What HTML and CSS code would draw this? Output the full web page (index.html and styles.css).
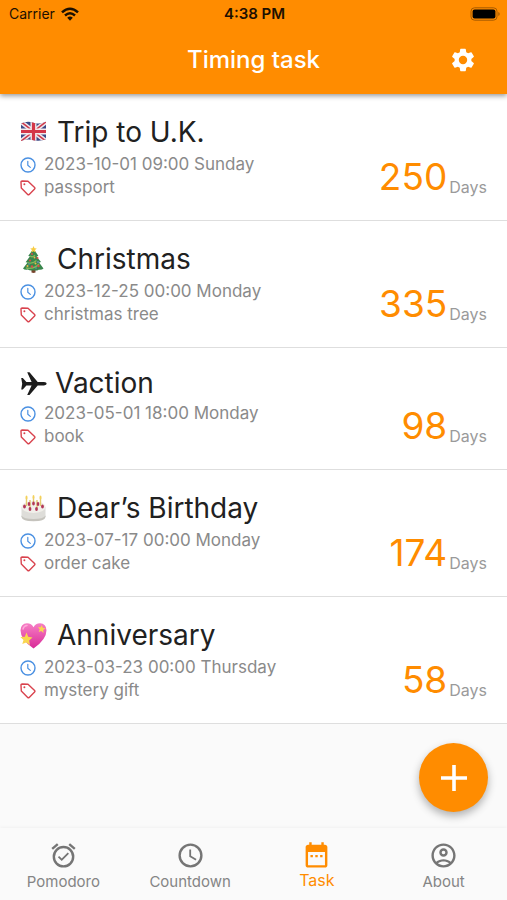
FILE: index.html
```html
<!DOCTYPE html>
<html lang="en">
<head>
	<meta charset="utf-8">
	<meta name="viewport" content="width=device-width, initial-scale=1">
	<title>Timing task</title>
	<link rel="stylesheet" href="styles.css">
</head>
<body>
	<svg class="sprite" aria-hidden="true">
		<symbol id="clock" viewBox="0 0 24 24">
			<path d="M12 2a10 10 0 1 0 0 20 10 10 0 0 0 0-20zm0 18a8 8 0 1 1 0-16 8 8 0 0 1 0 16zm.5-13H11v6l5.2 3.1.8-1.2-4.5-2.7V7z"/>
		</symbol>
		<symbol id="time" viewBox="0 0 16 16">
			<g fill="none" stroke="currentColor" stroke-linecap="round" stroke-linejoin="round">
				<circle cx="8" cy="8" r="7" stroke-width="1.4"/>
				<path d="M7.8 4.3v4l2.5 2.1" stroke-width="1.2"/>
			</g>
		</symbol>
		<symbol id="tag" viewBox="0 0 16 16">
			<path d="M1 2.2Q1 1 2.2 1L8 1.2l6.6 6.3q.7.8 0 1.5l-5.4 5.4q-.8.7-1.5 0L1.3 8z" fill="none" stroke="currentColor" stroke-width="1.4" stroke-linejoin="round"/>
			<circle cx="4.4" cy="4.2" r="1" fill="currentColor"/>
		</symbol>
	</svg>

	<header class="header">
		<div class="status">
			<div class="carrier">
				<span>Carrier</span>
				<svg class="wifi" viewBox="0 0 18 14" aria-hidden="true">
					<g fill="none" stroke="#1d1000" stroke-width="2.5">
						<path d="M1 5.4Q9-2 17 5.4"/>
						<path d="M4 8.5q5-4.4 10 0"/>
					</g>
					<path d="M6.2 10.7q2.8-2.4 5.6 0L9 13.7z" fill="#1d1000"/>
				</svg>
			</div>
			<span class="clock">4:38 PM</span>
			<svg class="battery" viewBox="0 0 30 14" aria-hidden="true">
				<rect x="1" y=".8" width="26" height="12.4" rx="3.5" fill="none" stroke="#a65b00"/>
				<rect x="2.6" y="2.4" width="22.8" height="9.2" rx="2" fill="#000"/>
				<path d="M28.3 5v4q1.4-.6 1.4-2t-1.4-2z" fill="#a65b00"/>
			</svg>
		</div>
		<div class="bar">
			<h1>Timing task</h1>
			<button class="settings" aria-label="Settings">
				<svg viewBox="0 0 24 24"><path d="M19.14 12.94c.04-.3.06-.61.06-.94 0-.32-.02-.64-.07-.94l2.03-1.58a.49.49 0 0 0 .12-.61l-1.92-3.32a.488.488 0 0 0-.59-.22l-2.39.96c-.5-.38-1.03-.7-1.62-.94l-.36-2.54a.484.484 0 0 0-.48-.41h-3.84c-.24 0-.43.17-.47.41l-.36 2.54c-.59.24-1.13.57-1.62.94l-2.39-.96c-.22-.08-.47 0-.59.22L2.74 8.87c-.12.21-.08.47.12.61l2.03 1.58c-.05.3-.09.63-.09.94s.02.64.07.94l-2.03 1.58a.49.49 0 0 0-.12.61l1.92 3.32c.12.22.37.29.59.22l2.39-.96c.5.38 1.03.7 1.62.94l.36 2.54c.05.24.24.41.48.41h3.84c.24 0 .44-.17.47-.41l.36-2.54c.59-.24 1.13-.56 1.62-.94l2.39.96c.22.08.47 0 .59-.22l1.92-3.32c.12-.22.07-.47-.12-.61l-2.01-1.58zM12 15.6A3.6 3.6 0 1 1 12 8.4a3.6 3.6 0 0 1 0 7.2z"/></svg>
			</button>
		</div>
	</header>

	<main class="content">
		<ul class="tasks">
			<li class="task">
				<div class="info">
					<h2>
						<svg class="emoji" viewBox="0 0 27 27" aria-hidden="true">
							<clipPath id="flag"><path d="M1 4.5q6-3 12.500-.8t12.500-.9v17.500q-6 2.400-12.500.9T1 22z"/></clipPath>
							<g clip-path="url(#flag)">
								<path d="M0 0h27v27H0z" fill="#3c4a87"/>
								<path d="M0 2l27 21M27 2L0 23" stroke="#eee5ea" stroke-width="4.5"/>
								<path d="M0 2l27 21M27 2L0 23" stroke="#cf3849" stroke-width="1.5"/>
								<path d="M13.5 1v23M0 12.5h27" stroke="#f3e9ec" stroke-width="6"/>
								<path d="M13.5 1v23M0 12.5h27" stroke="#d43648" stroke-width="3.2"/>
							</g>
						</svg>
						Trip to U.K.
					</h2>
					<p><svg class="time"><use href="#time"/></svg>2023-10-01 09:00 Sunday</p>
					<p><svg class="tag"><use href="#tag"/></svg>passport</p>
				</div>
				<div class="left"><strong>250</strong><span>Days</span></div>
			</li>
			<li class="task">
				<div class="info">
					<h2>
						<svg class="emoji" viewBox="0 0 27 27" aria-hidden="true">
							<path d="M11.5 22h4v4.5q-2 .8-4 0z" fill="#79452e"/>
							<path d="M13.5 2.500L8.200 10l1.800.2-4.400 6 2 .2-4.600 6q2 1.900 4.700 1 2.600 1.600 5.400.8 3.300 1 5.600-.5 3 .6 4.800-1.300l-4.400-6 1.900-.4-4.400-5.600 1.800-.4z" fill="#39864d"/>
							<path d="M10 10q3 2 5-1M7.5 16.5q5 2 9-2M6 22q8 1.500 13-4" fill="none" stroke="#83b85a" stroke-width="1.3"/>
							<path d="M13.5 0l1 2.300 2.300.2-1.800 1.600.6 2.400-2.100-1.300-2.100 1.300.6-2.400-1.800-1.600 2.300-.2z" fill="#f8cc42"/>
							<g fill="#d94c48"><circle cx="12" cy="8" r="1"/><circle cx="17.5" cy="12" r="1"/><circle cx="10" cy="14.5" r="1.1"/><circle cx="18.5" cy="20" r="1.2"/><circle cx="12" cy="20.5" r="1.2"/></g>
							<g fill="#f0b94a"><circle cx="14.5" cy="11.5" r=".9"/><circle cx="15.5" cy="17.5" r="1"/><circle cx="7.5" cy="20" r="1"/></g>
							<g fill="#6b90c0"><circle cx="18" cy="16" r=".9"/><circle cx="9" cy="18" r=".8"/><circle cx="16" cy="22" r=".8"/></g>
						</svg>
						Christmas
					</h2>
					<p><svg class="time"><use href="#time"/></svg>2023-12-25 00:00 Monday</p>
					<p><svg class="tag"><use href="#tag"/></svg>christmas tree</p>
				</div>
				<div class="left"><strong>335</strong><span>Days</span></div>
			</li>
			<li class="task compact">
				<div class="info">
					<h2>
						<svg class="emoji" viewBox="0 0 27 27" aria-hidden="true"><path d="M1.200 8h1.600l3.600 4h5.200L7.200 2.300h2.300l8.200 9.700H24q2.700.4 2.700 1.700T24 15.400h-6.300l-8.200 9.700H7.200l4.400-9.700H6.400l-3.600 4H1.200l1-5.700z" fill="#1c1c1c"/></svg>
						Vaction
					</h2>
					<p><svg class="time"><use href="#time"/></svg>2023-05-01 18:00 Monday</p>
					<p><svg class="tag"><use href="#tag"/></svg>book</p>
				</div>
				<div class="left"><strong>98</strong><span>Days</span></div>
			</li>
			<li class="task">
				<div class="info">
					<h2>
						<svg class="emoji" viewBox="0 0 27 27" aria-hidden="true">
							<path d="M1.500 12v9.500q1 4.500 12 4.500t12-4.500V12z" fill="#deddd9"/>
							<path d="M1.500 20.500v1.500q1 4.300 12 4.300t12-4.300v-1.500q-2 3.500-12 3.500t-12-3.500z" fill="#c5c3bd"/>
							<ellipse cx="13.5" cy="12" rx="12" ry="6" fill="#f1efea"/>
							<g stroke="#e4ca70" stroke-width="1.4"><path d="M6.500 3v8M13.500 2v8M20.500 3v8M10 5v8M17 5v8"/></g>
							<g fill="#f4d15a"><ellipse cx="6.5" cy="2.5" rx="1" ry="1.9"/><ellipse cx="13.5" cy="2" rx="1" ry="1.9"/><ellipse cx="20.5" cy="2.5" rx="1" ry="1.9"/></g>
							<g fill="#b23858"><ellipse cx="4.5" cy="11.5" rx="1.4" ry="2"/><ellipse cx="9" cy="9" rx="1.3" ry="2"/><ellipse cx="13.5" cy="8.5" rx="1.3" ry="2"/><ellipse cx="18" cy="9" rx="1.3" ry="2"/><ellipse cx="22.5" cy="11.5" rx="1.4" ry="2"/><ellipse cx="10" cy="14" rx="1.4" ry="2"/><ellipse cx="16.5" cy="14" rx="1.4" ry="2"/></g>
						</svg>
						Dear’s Birthday
					</h2>
					<p><svg class="time"><use href="#time"/></svg>2023-07-17 00:00 Monday</p>
					<p><svg class="tag"><use href="#tag"/></svg>order cake</p>
				</div>
				<div class="left"><strong>174</strong><span>Days</span></div>
			</li>
			<li class="task">
				<div class="info">
					<h2>
						<svg class="emoji" viewBox="0 0 27 27" aria-hidden="true">
							<linearGradient id="pink" x2="0" y2="1"><stop stop-color="#f77fc5"/><stop offset="1" stop-color="#d82b98"/></linearGradient>
							<path d="M13.500 26.500Q.5 17.500.5 8.200.8 1.500 7 1.200q4.500 0 6.500 4 2-4 6.500-4 6.200.3 6.500 7 0 9.300-13 18.300z" fill="url(#pink)"/>
							<path d="M3 7q.8-3.300 4-3.500" fill="none" stroke="#ffa9da" stroke-width="1.5" stroke-linecap="round"/>
							<path d="M6.500 10.500l1.700 4.300 4.300.7-3.300 2.900.8 4.600-3.800-2.600L2.300 22l1.200-4L.4 15l4.400-.3z" fill="#f9d650"/>
							<path d="M21.800 3l1 2.700 2.800.6-2.300 1.600.2 3-2.200-1.900-2.600 1 1-2.700-1.700-2.100 2.700.1z" fill="#f9d650"/>
						</svg>
						Anniversary
					</h2>
					<p><svg class="time"><use href="#time"/></svg>2023-03-23 00:00 Thursday</p>
					<p><svg class="tag"><use href="#tag"/></svg>mystery gift</p>
				</div>
				<div class="left"><strong>58</strong><span>Days</span></div>
			</li>
		</ul>
		<button class="add" aria-label="Add task">
			<svg viewBox="0 0 26 26"><path d="M13 0v26M0 13h26" stroke="#fff" stroke-width="3.6"/></svg>
		</button>
	</main>

	<nav class="tabs">
		<a href="#pomodoro">
			<svg viewBox="0 0 24 24"><path d="M22 5.720l-4.600-3.860-1.290 1.530 4.600 3.860L22 5.720zM7.880 3.390L6.600 1.860 2 5.710l1.290 1.530 4.590-3.850zM12 4a9 9 0 1 0 0 18 9 9 0 0 0 0-18zm0 16a7 7 0 1 1 0-14 7 7 0 0 1 0 14zm-1.460-5.470L8.410 12.400l-1.060 1.060 3.180 3.180 6-6-1.060-1.060-4.930 4.950z"/></svg>
			<span>Pomodoro</span>
		</a>
		<a href="#countdown">
			<svg><use href="#clock"/></svg>
			<span>Countdown</span>
		</a>
		<a class="active" href="#task" aria-current="page">
			<svg viewBox="0 0 24 24"><path fill-rule="evenodd" d="M19 3h-1V1h-2v2H8V1H6v2H5c-1.100 0-2 .9-2 2v15c0 1.100.9 2 2 2h14c1.100 0 2-.9 2-2V5c0-1.100-.9-2-2-2zm0 17H5V9h14zM7 11.500h2v2H7zm4 0h2v2h-2zm4 0h2v2h-2z"/></svg>
			<span>Task</span>
		</a>
		<a href="#about">
			<svg viewBox="0 0 24 24"><path fill-rule="evenodd" d="M12 2C6.480 2 2 6.480 2 12s4.480 10 10 10 10-4.480 10-10S17.520 2 12 2zM7.350 18.500C8.660 17.560 10.260 17 12 17s3.340.56 4.650 1.500C15.340 19.440 13.740 20 12 20s-3.340-.56-4.650-1.500zm10.790-1.380C16.450 15.800 14.320 15 12 15s-4.450.8-6.140 2.120C4.700 15.730 4 13.950 4 12c0-4.420 3.580-8 8-8s8 3.580 8 8c0 1.950-.7 3.730-1.860 5.120zM12 6c-1.930 0-3.500 1.570-3.500 3.500S10.070 13 12 13s3.500-1.570 3.500-3.500S13.930 6 12 6zm0 5a1.500 1.500 0 1 1 0-3 1.500 1.500 0 0 1 0 3z"/></svg>
			<span>About</span>
		</a>
	</nav>
</body>
</html>
```
FILE: styles.css
```css
*{
	box-sizing: border-box;
}
body{
	margin: 0;
	min-height: 100vh;
	display: flex;
	flex-direction: column;
	background-color: #fafafa;
	color: #212121;
	font-family: Inter, "Liberation Sans", sans-serif;
}
h1, h2, p, ul{
	margin: 0;
	padding: 0;
	font-weight: 400;
}
svg{
	flex: none;
	fill: currentColor;
}
button{
	padding: 0;
	border: none;
	color: #fff;
	cursor: pointer;
}
.sprite{
	position: absolute;
	width: 0;
	height: 0;
}
.header{
	position: relative;
	z-index: 1;
	background-color: #ff8c00;
	box-shadow: 0 2px 5px rgba(0, 0, 0, 0.4);
}
.status, .bar{
	display: grid;
	grid-template-columns: 1fr auto 1fr;
	align-items: center;
}
.status{
	height: 27px;
	padding: 0 7px 0 9px;
	color: #1d1000;
	font-size: 14px;
}
.carrier{
	display: flex;
	align-items: center;
	gap: 6px;
}
.wifi{
	width: 18px;
	height: 14px;
}
.clock{
	font-size: 15px;
	font-weight: 600;
}
.battery{
	width: 30px;
	height: 14px;
	justify-self: end;
}
.bar{
	height: 67px;
	padding: 0 30px 2px;
	color: #fff;
}
.bar h1{
	grid-column: 2;
	font-size: 24px;
	font-weight: 500;
}
.settings{
	justify-self: end;
	height: 28px;
	background: none;
}
.settings svg{
	width: 28px;
	height: 28px;
}
.content{
	position: relative;
	flex: 1;
}
.tasks{
	list-style: none;
}
.task{
	display: flex;
	justify-content: space-between;
	align-items: flex-end;
	padding: 22px 20px 21px;
	background-color: #fff;
	border-bottom: 1px solid #dedede;
}
.task h2{
	display: flex;
	align-items: center;
	gap: 10px;
	margin-bottom: 5px;
	font-size: 28px;
	line-height: 32px;
}
.compact h2{
	gap: 8px;
	line-height: 27px;
}
.emoji{
	width: 27px;
	height: 27px;
}
.task p{
	display: flex;
	align-items: center;
	gap: 8px;
	color: #8a8a8a;
	font-size: 17px;
	line-height: 23px;
}
.task p svg{
	width: 16px;
	height: 16px;
}
.task .time{
	color: #4a90e2;
}
.task .tag{
	color: #d9434e;
}
.left{
	display: flex;
	align-items: flex-end;
	gap: 2px;
}
.left strong{
	color: #ff8c00;
	font-size: 37px;
	font-weight: 400;
	line-height: 44px;
}
.left span{
	color: #9a9a9a;
	font-size: 16px;
	line-height: 23px;
}
.add{
	position: absolute;
	right: 19px;
	bottom: 16px;
	display: grid;
	place-items: center;
	width: 69px;
	height: 69px;
	border-radius: 50%;
	background-color: #ff8c00;
	box-shadow: 0 4px 8px rgba(0, 0, 0, 0.3);
}
.add svg{
	width: 26px;
	height: 26px;
}
.tabs{
	display: grid;
	grid-template-columns: repeat(4, 1fr);
	height: 72px;
	padding-top: 13px;
	box-shadow: 0 -1px 3px rgba(0, 0, 0, 0.04);
}
.tabs a{
	display: flex;
	flex-direction: column;
	align-items: center;
	gap: 2px;
	color: #757575;
	font-size: 15px;
	line-height: 20px;
	text-decoration: none;
}
.tabs svg{
	width: 29px;
	height: 29px;
}
.tabs span{
	color: #858585;
}
.tabs .active, .active span{
	color: #ff8c00;
}
.tabs .active{
	gap: 0;
	font-size: 16px;
}
```
